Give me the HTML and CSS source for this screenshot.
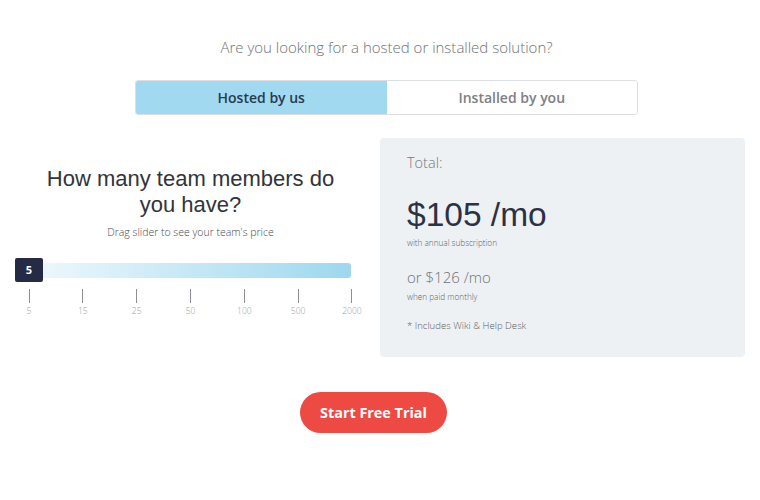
FILE: index.html
```html
<!DOCTYPE html>
<html lang="en">
<head>
    <meta charset="UTF-8">
    <title>Pricing</title>
    <link rel="stylesheet" href="styles.css">
</head>
<body>
<div class="pricing">
    <p class="question">Are you looking for a hosted or installed solution?</p>
    <div class="toggle">
        <button class="toggleBtn active">Hosted by us</button>
        <button class="toggleBtn">Installed by you</button>
    </div>

    <div class="main">
        <div class="members">
            <h2>How many team members do you have?</h2>
            <p class="hint">Drag slider to see your team's price</p>
            <div class="slider">
                <div class="handle">5</div>
                <div class="track"></div>
            </div>
            <div class="ticks">
                <div class="tick"><span class="line"></span>5</div>
                <div class="tick"><span class="line"></span>15</div>
                <div class="tick"><span class="line"></span>25</div>
                <div class="tick"><span class="line"></span>50</div>
                <div class="tick"><span class="line"></span>100</div>
                <div class="tick"><span class="line"></span>500</div>
                <div class="tick"><span class="line"></span>2000</div>
            </div>
        </div>

        <div class="total">
            <div class="totalLabel">Total:</div>
            <div class="price">$105 /mo</div>
            <div class="note">with annual subscription</div>
            <div class="monthly">or $126 /mo</div>
            <div class="note">when paid monthly</div>
            <div class="includes">* Includes Wiki &amp; Help Desk</div>
        </div>
    </div>

    <div class="cta">
        <button class="trial">Start Free Trial</button>
    </div>
</div>
</body>
</html>
```

FILE: styles.css
```css
body {
    margin: 0;
    background: #fff;
    font-family: "Open Sans", "Liberation Sans", sans-serif;
}

.pricing {
    width: 760px;
    height: 500px;
}

/* hosted / installed question */
.question {
    width: 503px;
    margin: 0 0 0 135px;
    padding-top: 37px;
    text-align: center;
    font-size: 15px;
    font-weight: 300;
    line-height: 20px;
    color: #6f7275;
}

.toggle {
    display: flex;
    width: 503px;
    height: 35px;
    margin: 23px 0 0 135px;
    border: 1px solid #dcdfe2;
    border-radius: 3px;
    box-sizing: border-box;
    overflow: hidden;
}
.toggleBtn {
    flex: 1;
    border: none;
    background: #fff;
    font-family: "Open Sans", sans-serif;
    font-size: 14px;
    font-weight: 600;
    color: #7d8084;
}
.toggleBtn.active {
    background: #a1d9f1;
    color: #283a4c;
}

/* main row */
.main {
    display: flex;
    gap: 14px;
    margin-top: 23px;
    padding: 0 15px;
}

.members {
    width: 351px;
    padding-top: 28px;
    text-align: center;
}
.members h2 {
    margin: 0 auto;
    width: 310px;
    font-family: "Liberation Sans", Arial, sans-serif;
    font-size: 22px;
    font-weight: 400;
    line-height: 26px;
    color: #30343b;
}
.hint {
    margin: 7px 0 0;
    font-size: 10.5px;
    font-weight: 300;
    line-height: 14px;
    color: #45494e;
}

.slider {
    display: flex;
    align-items: center;
    margin-top: 19px;
    height: 24px;
}
.handle {
    width: 28px;
    height: 24px;
    line-height: 24px;
    background: #252b45;
    color: #fff;
    font-size: 11px;
    font-weight: 700;
    border-radius: 2px;
}
.track {
    width: 308px;
    height: 15px;
    background: linear-gradient(to right, #ebf7fc, #9dd8ef);
    border-radius: 0 3px 3px 0;
}

.ticks {
    display: flex;
    justify-content: space-between;
    margin-top: 7px;
}
.tick {
    width: 28px;
    font-size: 8.5px;
    font-weight: 300;
    line-height: 10px;
    color: #9a9da1;
}
.line {
    display: block;
    width: 1px;
    height: 14px;
    margin: 0 auto 3px;
    background: #8b8e92;
}

/* total panel */
.total {
    width: 365px;
    height: 219px;
    box-sizing: border-box;
    padding: 15px 27px 0;
    background: #eef1f3;
    border-radius: 4px;
}
.totalLabel {
    font-size: 14.5px;
    font-weight: 300;
    line-height: 20px;
    color: #75787c;
}
.price {
    margin-top: 24px;
    font-family: "Liberation Sans", Arial, sans-serif;
    font-size: 33.5px;
    line-height: 36px;
    color: #2b3146;
}
.note {
    margin-top: 5px;
    font-size: 8.2px;
    font-weight: 300;
    line-height: 10px;
    color: #5b5e62;
}
.monthly {
    margin-top: 19px;
    font-size: 15px;
    font-weight: 300;
    line-height: 20px;
    color: #6e7175;
}
.includes {
    margin-top: 18px;
    font-size: 9.6px;
    font-weight: 300;
    line-height: 12px;
    color: #5b5e62;
}

/* button */
.cta {
    display: flex;
    margin: 35px 0 0 300px;
}
.trial {
    width: 147px;
    height: 41px;
    border: none;
    border-radius: 21px;
    background: #ee4a44;
    color: #fff;
    font-family: "Open Sans", sans-serif;
    font-size: 14.4px;
    font-weight: 700;
}
```
